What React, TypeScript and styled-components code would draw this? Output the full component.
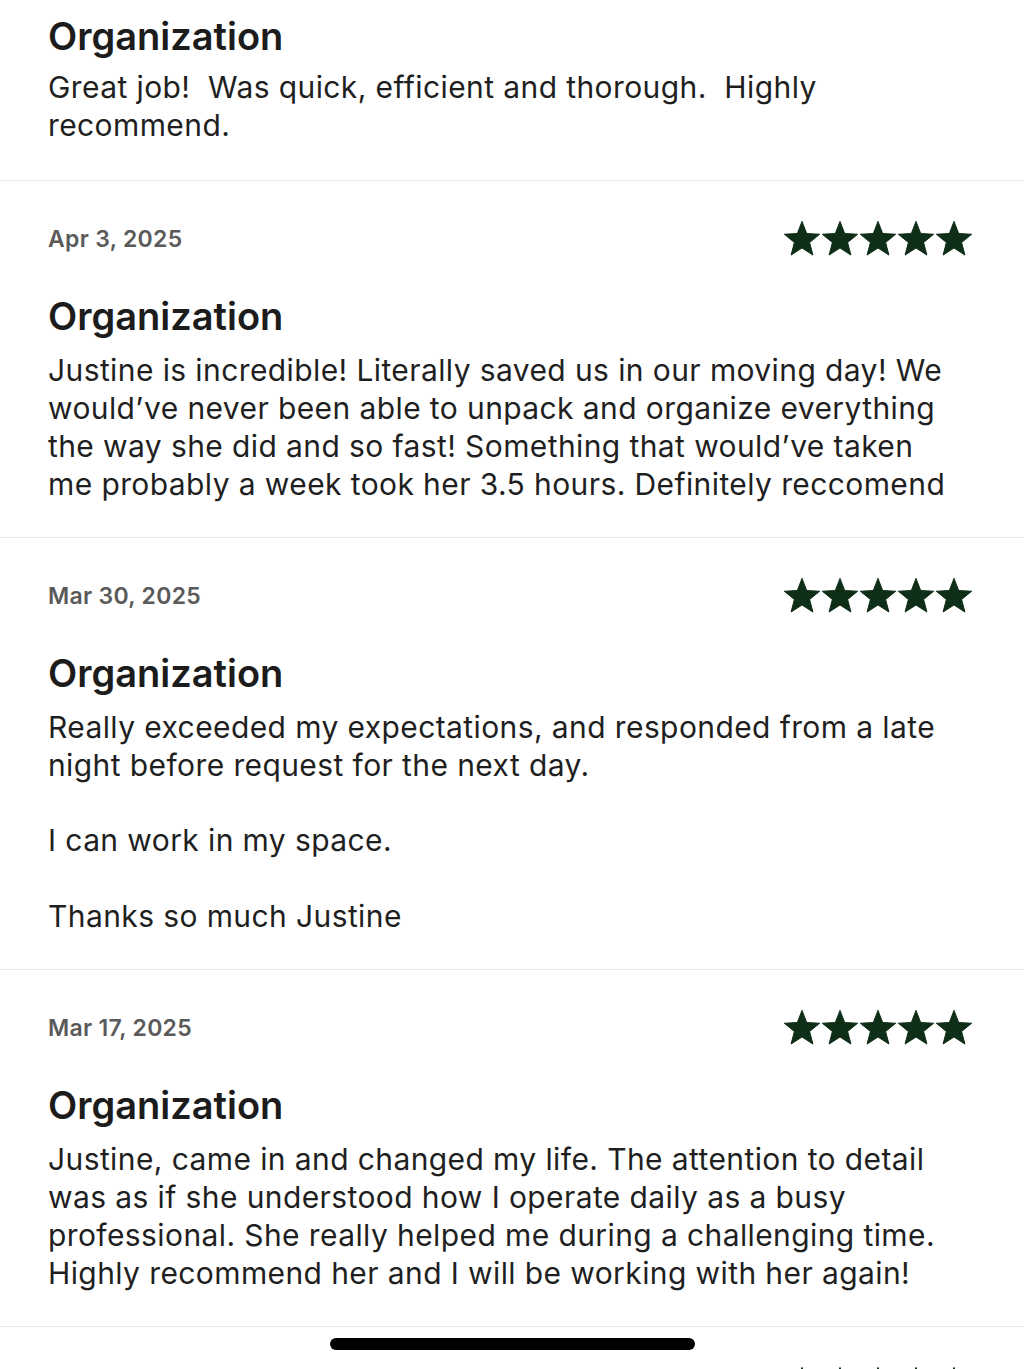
import React from 'react'
import styled, { createGlobalStyle } from 'styled-components'

const GlobalStyle = createGlobalStyle`
  html, body {
    margin: 0;
    padding: 0;
    background: #ffffff;
  }
  body {
    font-family: Inter, 'Noto Sans', 'Liberation Sans', sans-serif;
    color: #1f1f1f;
    -webkit-font-smoothing: antialiased;
  }
`

const Page = styled.div`
  width: 100%;
  padding-top: 13px;
`

const Review = styled.section<{ $partial?: boolean }>`
  padding: ${({ $partial }) => ($partial ? '0 48px 36px' : '40px 48px 34px')};
  border-bottom: 1px solid #e6e6e6;
`

const MetaRow = styled.div`
  display: flex;
  align-items: center;
  justify-content: space-between;
  height: 36px;
`

const DateText = styled.span`
  font-size: 23px;
  font-weight: 600;
  color: #5a5a5a;
  letter-spacing: 0.3px;
`

const Stars = styled.div`
  display: flex;
  gap: 2px;
  margin-left: auto;
  margin-right: 4px;
`

const Title = styled.h3<{ $partial?: boolean }>`
  margin: ${({ $partial }) => ($partial ? '0 0 10px' : '36px 0 13px')};
  font-size: 38px;
  line-height: 46px;
  font-weight: 600;
  color: #1c1c1c;
`

const Body = styled.p`
  max-width: 910px;
  margin: 0;
  font-size: 30px;
  line-height: 37.7px;
  font-weight: 400;
  letter-spacing: 0.4px;
  color: #1f1f1f;
  white-space: pre-line;
`

const HomeBar = styled.div`
  position: fixed;
  left: 50%;
  bottom: 19px;
  width: 365px;
  height: 12px;
  margin-left: -182px;
  border-radius: 6px;
  background: #000000;
`

const starPoints = (() => {
  const R = 18.6
  const r = 8
  const cx = 18
  const cy = 19
  const pts: string[] = []
  for (let i = 0; i < 10; i++) {
    const rad = i % 2 === 0 ? R : r
    const a = (-90 + i * 36) * (Math.PI / 180)
    pts.push(`${(cx + rad * Math.cos(a)).toFixed(2)},${(cy + rad * Math.sin(a)).toFixed(2)}`)
  }
  return pts.join(' ')
})()

const Star = () => (
  <svg width="36" height="36" viewBox="0 0 36 36" aria-hidden="true">
    <polygon points={starPoints} fill="#0f2e18" strokeLinejoin="round" stroke="#0f2e18" strokeWidth="1" />
  </svg>
)

const Rating = () => (
  <Stars>
    {[0, 1, 2, 3, 4].map((i) => (
      <Star key={i} />
    ))}
  </Stars>
)

const reviews = [
  {
    date: 'Apr 3, 2025',
    text: 'Justine is incredible! Literally saved us in our moving day! We would\u2019ve never been able to unpack and organize everything the way she did and so fast! Something that would\u2019ve taken me probably a week took her 3.5 hours. Definitely reccomend',
  },
  {
    date: 'Mar 30, 2025',
    text: 'Really exceeded my expectations, and responded from a late night before request for the next day.\n\nI can work in my space.\n\nThanks so much Justine',
  },
  {
    date: 'Mar 17, 2025',
    text: 'Justine, came in and changed my life. The attention to detail was as if she understood how I operate daily as a busy professional. She really helped me during a challenging time. Highly recommend her and I will be working with her again!',
  },
]

const App = () => (
  <Page>
    <GlobalStyle />
    <Review $partial>
      <Title $partial>Organization</Title>
      <Body>{'Great job!\u00a0 Was quick, efficient and thorough.\u00a0 Highly recommend.'}</Body>
    </Review>
    {reviews.map((r) => (
      <Review key={r.date}>
        <MetaRow>
          <DateText>{r.date}</DateText>
          <Rating />
        </MetaRow>
        <Title>Organization</Title>
        <Body>{r.text}</Body>
      </Review>
    ))}
    <Review>
      <MetaRow>
        <Rating />
      </MetaRow>
    </Review>
    <HomeBar />
  </Page>
)

export default App
